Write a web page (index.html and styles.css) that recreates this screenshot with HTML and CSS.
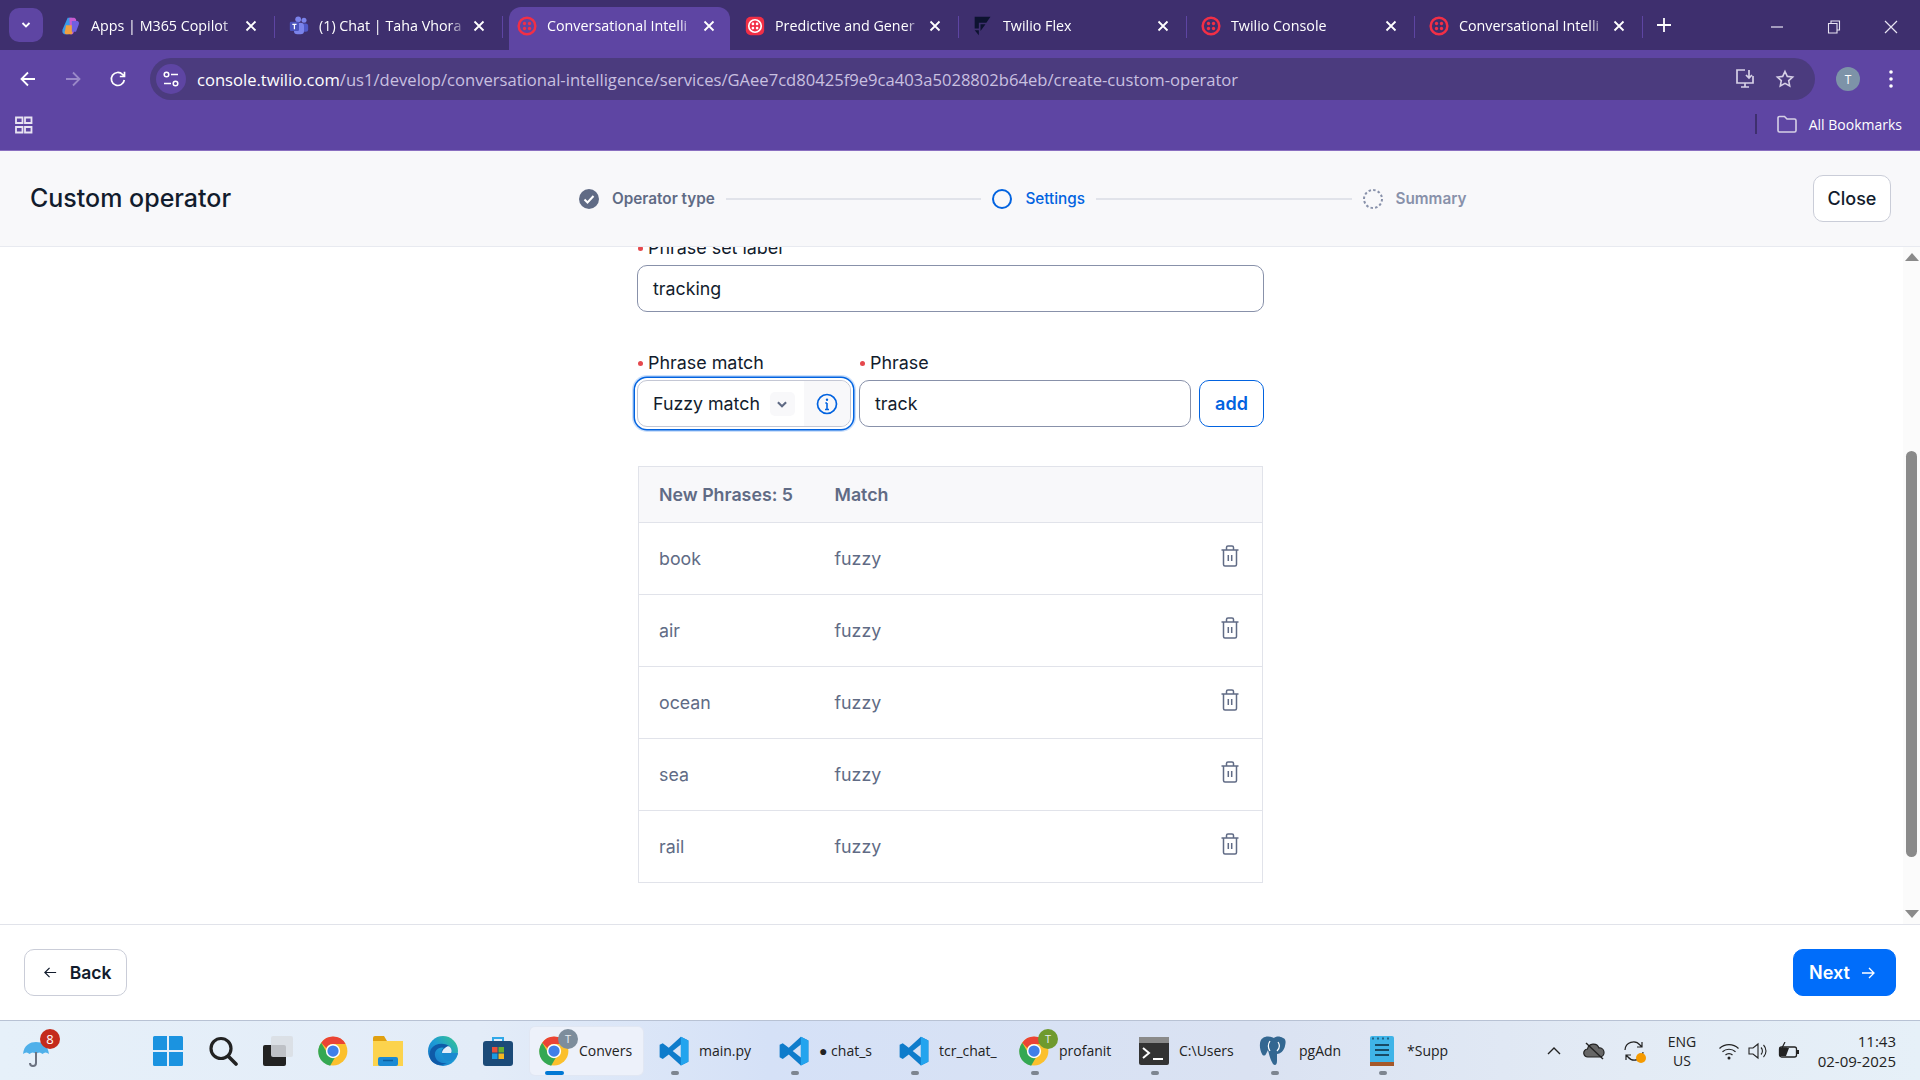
FILE: index.html
```html
<!DOCTYPE html>
<html lang="en">
<head>
  <meta charset="UTF-8" />
  <title>Custom operator</title>
  <link rel="stylesheet" href="styles.css">
</head>
<body>
  <svg class="defs" width="0" height="0">
    <symbol id="x" viewBox="0 0 12 12"><path d="M1.5 1.5l9 9M10.5 1.5l-9 9" fill="none" stroke="currentColor" stroke-width="1.8"/></symbol>
    <symbol id="twilio" viewBox="0 0 24 24">
      <circle cx="12" cy="12" r="10" fill="none" stroke="#f22f46" stroke-width="3"/>
      <circle cx="9" cy="9" r="2" fill="#f22f46"/><circle cx="15" cy="9" r="2" fill="#f22f46"/>
      <circle cx="9" cy="15" r="2" fill="#f22f46"/><circle cx="15" cy="15" r="2" fill="#f22f46"/>
    </symbol>
    <symbol id="chrome" viewBox="0 0 24 24">
      <circle cx="12" cy="12" r="11.5" fill="#fbc02d"/>
      <path d="M12 .5a11.5 11.5 0 0 1 10 5.8H12a5.7 5.7 0 0 0-5.2 3.4L2.6 5.3A11.5 11.5 0 0 1 12 .5z" fill="#ea4335"/>
      <path d="M2.6 5.3l5 8.7a5.7 5.7 0 0 0 5.700 3.500l-3.600 6.200A11.500 11.500 0 0 1 2.600 5.300z" fill="#34a853"/>
      <circle cx="12" cy="12" r="5.700" fill="#fff"/><circle cx="12" cy="12" r="4.500" fill="#3f7fe8"/>
    </symbol>
    <symbol id="vscode" viewBox="0 0 24 24">
      <path fill-rule="evenodd" d="M17.500 .5L23.500 3.500V20.500L17.500 23.500L7.800 14.700L3 18.300L.5 17V7L3 5.700L7.800 9.300zM17.500 6.800L11 12L17.500 17.200z" fill="#0f7ccb"/>
      <path d="M17.500 .5L23.500 3.500V20.500L17.500 23.500z" fill="#23a4ee"/>
    </symbol>
    <symbol id="trash" viewBox="0 0 20 22">
      <path d="M1.500 5h17M3.500 5v14.500a1.500 1.500 0 0 0 1.500 1.500h10a1.500 1.500 0 0 0 1.500-1.500V5M6.500 5V2.500A1.500 1.500 0 0 1 8 1h4a1.500 1.500 0 0 1 1.500 1.500V5M8.300 10v6M11.700 10v6" fill="none" stroke="#606b85" stroke-width="1.500"/>
    </symbol>
  </svg>

  <div class="tabstrip">
    <div class="tab-menu"><svg width="12" height="12" viewBox="0 0 12 12"><path d="M2.500 4l3.500 3.500L9.500 4" fill="none" stroke="#fff" stroke-width="1.800"/></svg></div>
    <div class="tab">
      <svg class="tab-icon" viewBox="0 0 24 24"><path d="M8 2h5l-4 20H5C2 22 1 19 2 16z" fill="#3a9be8"/><path d="M10 2h5c3 0 4 3 3 6l-3 12c-.5 2-2 2-4 2z" fill="#c85ad0"/><path d="M6 11h10l-3 11H7c-3 0-3-3-2-5z" fill="#f0a040"/><path d="M13 6h6c3 0 3 3 2 5l-3 8h-5z" fill="#7060e0"/></svg>
      <span class="tab-title">Apps | M365 Copilot</span>
      <svg class="tab-close"><use href="#x"/></svg>
    </div>
    <div class="tab">
      <svg class="tab-icon" viewBox="0 0 24 24"><circle cx="18" cy="5" r="3" fill="#7b83eb"/><circle cx="11" cy="4" r="3.500" fill="#7b83eb"/><rect x="15" y="9" width="8" height="10" rx="3" fill="#5059c9"/><rect x="6" y="8" width="12" height="14" rx="4" fill="#7b83eb"/><rect x="1" y="7" width="11" height="11" rx="1.500" fill="#4b53bc"/><path d="M4 10h5M6.500 10v6" stroke="#fff" stroke-width="1.500"/></svg>
      <span class="tab-title">(1) Chat | Taha Vhora</span>
      <svg class="tab-close"><use href="#x"/></svg>
    </div>
    <div class="tab tab-active">
      <svg class="tab-icon"><use href="#twilio"/></svg>
      <span class="tab-title">Conversational Intelli</span>
      <svg class="tab-close"><use href="#x"/></svg>
    </div>
    <div class="tab">
      <svg class="tab-icon" viewBox="0 0 24 24"><rect x="1" y="1" width="22" height="22" rx="6" fill="#f22f46"/><circle cx="12" cy="12" r="7.500" fill="none" stroke="#fff" stroke-width="2"/><circle cx="9.500" cy="9.500" r="1.600" fill="#fff"/><circle cx="14.500" cy="9.500" r="1.600" fill="#fff"/><circle cx="9.500" cy="14.500" r="1.600" fill="#fff"/><circle cx="14.500" cy="14.500" r="1.600" fill="#fff"/></svg>
      <span class="tab-title">Predictive and Gener</span>
      <svg class="tab-close"><use href="#x"/></svg>
    </div>
    <div class="tab">
      <svg class="tab-icon" viewBox="0 0 24 24"><path d="M2 1h19l-5 7H7v7H2zM9 10h6l-6 8z M2 17l5 6v-6z" fill="#0d1330"/></svg>
      <span class="tab-title">Twilio Flex</span>
      <svg class="tab-close"><use href="#x"/></svg>
    </div>
    <div class="tab">
      <svg class="tab-icon"><use href="#twilio"/></svg>
      <span class="tab-title">Twilio Console</span>
      <svg class="tab-close"><use href="#x"/></svg>
    </div>
    <div class="tab">
      <svg class="tab-icon"><use href="#twilio"/></svg>
      <span class="tab-title">Conversational Intelli</span>
      <svg class="tab-close"><use href="#x"/></svg>
    </div>
    <svg class="tab-new" width="16" height="16" viewBox="0 0 16 16"><path d="M8 1v14M1 8h14" stroke="#fff" stroke-width="1.800"/></svg>
    <div class="window-btns">
      <svg width="14" height="14" viewBox="0 0 14 14"><path d="M1 7h12" stroke="#e8e4f2" stroke-width="1.200"/></svg>
      <svg width="14" height="14" viewBox="0 0 14 14"><path d="M1.500 3.500h8.500v9.500h-8.500zM4 3.500V1h8.500v9H10" fill="none" stroke="#e8e4f2" stroke-width="1.100"/></svg>
      <svg width="14" height="14" viewBox="0 0 14 14"><path d="M1 1l12 12M13 1L1 13" stroke="#e8e4f2" stroke-width="1.200"/></svg>
    </div>
  </div>

  <div class="toolbar">
    <div class="nav-row">
      <svg class="nav-icon" viewBox="0 0 20 20"><path d="M17 10H4M10 3.500L3.500 10l6.500 6.500" fill="none" stroke="#fff" stroke-width="1.800"/></svg>
      <svg class="nav-icon" viewBox="0 0 20 20"><path d="M3 10h13M10 3.500l6.500 6.500-6.500 6.500" fill="none" stroke="#9a89c8" stroke-width="1.800"/></svg>
      <svg class="nav-icon" viewBox="0 0 20 20"><path d="M16.300 11a6.500 6.500 0 1 1-1.700-5.500L16.500 7.500M16.500 2.800v4.700h-4.700" fill="none" stroke="#fff" stroke-width="1.700"/></svg>
      <div class="omnibox">
        <div class="site-btn"><svg width="18" height="18" viewBox="0 0 18 18"><circle cx="4.500" cy="4.500" r="2.300" fill="none" stroke="#fff" stroke-width="1.500"/><path d="M9 4.500h7M2 13.500h7" stroke="#fff" stroke-width="1.500"/><circle cx="13.500" cy="13.500" r="2.300" fill="none" stroke="#fff" stroke-width="1.500"/></svg></div>
        <div class="url"><span class="url-host">console.twilio.com</span>/us1/develop/conversational-intelligence/services/GAee7cd80425f9e9ca403a5028802b64eb/create-custom-operator</div>
        <svg class="omni-icon" viewBox="0 0 22 22"><path d="M11 2H3v13h16v-7M7 19h8M11 15v4M15 2v8M12 7l3 3 3-3" fill="none" stroke="#d6d0e6" stroke-width="1.700"/></svg>
        <svg class="omni-icon" viewBox="0 0 22 22"><path d="M11 3.500l2.300 4.900 5.300.6-3.900 3.600 1 5.300L11 15.300l-4.700 2.600 1-5.300L3.400 9l5.300-.6z" fill="none" stroke="#d6d0e6" stroke-width="1.600"/></svg>
      </div>
      <div class="avatar">T</div>
      <svg class="kebab" width="4" height="18" viewBox="0 0 4 18"><circle cx="2" cy="2" r="1.800" fill="#fff"/><circle cx="2" cy="9" r="1.800" fill="#fff"/><circle cx="2" cy="16" r="1.800" fill="#fff"/></svg>
    </div>
    <div class="bookmarks-row">
      <svg class="apps-icon" width="20" height="20" viewBox="0 0 20 20"><path d="M2 2.500h6.500v5.500h-6.500zM11 2.500h6.500v5.500h-6.500zM2 12h6.500v5.500h-6.500zM11 12h6.500v5.500h-6.500z" fill="none" stroke="#e8e4f2" stroke-width="1.800"/></svg>
      <div class="bookmarks-right">
        <div class="bm-divider"></div>
        <svg width="20" height="18" viewBox="0 0 20 18"><path d="M1 3a1.500 1.500 0 0 1 1.500-1.500h5L10 4h7.500A1.500 1.500 0 0 1 19 5.500v10a1.500 1.500 0 0 1-1.500 1.500h-15A1.500 1.500 0 0 1 1 15.500z" fill="none" stroke="#d6d0e6" stroke-width="1.600"/></svg>
        <span class="bm-label">All Bookmarks</span>
      </div>
    </div>
  </div>

  <header class="page-header">
    <h1 class="page-title">Custom operator</h1>
    <div class="stepper">
      <svg class="step-icon" viewBox="0 0 20 20"><circle cx="10" cy="10" r="10" fill="#606b85"/><path d="M5.500 10.500l3 3 6-6.500" fill="none" stroke="#fff" stroke-width="2"/></svg>
      <span class="step-label">Operator type</span>
      <div class="step-line"></div>
      <svg class="step-icon" viewBox="0 0 20 20"><circle cx="10" cy="10" r="9" fill="none" stroke="#0263e0" stroke-width="2"/></svg>
      <span class="step-label step-current">Settings</span>
      <div class="step-line"></div>
      <svg class="step-icon" viewBox="0 0 20 20"><circle cx="10" cy="10" r="9" fill="none" stroke="#8891aa" stroke-width="2" stroke-dasharray="2.500 2.200"/></svg>
      <span class="step-label step-todo">Summary</span>
    </div>
    <button class="btn btn-close">Close</button>
  </header>

  <main class="main">
    <div class="scroll-area">
      <form class="form">
        <label class="field-label"><span class="req"></span>Phrase set label</label>
        <div class="input">tracking</div>

        <div class="phrase-row">
          <div class="col-match">
            <label class="field-label"><span class="req"></span>Phrase match</label>
            <div class="select">
              <span class="select-value">Fuzzy match</span>
              <span class="select-chevron"><svg width="14" height="14" viewBox="0 0 12 12"><path d="M2.500 4.500L6 8l3.500-3.500" fill="none" stroke="#606b85" stroke-width="1.800"/></svg></span>
              <span class="select-info"><svg width="22" height="22" viewBox="0 0 22 22"><circle cx="11" cy="11" r="9.500" fill="none" stroke="#0263e0" stroke-width="1.700"/><circle cx="11" cy="6.800" r="1.200" fill="#0263e0"/><path d="M11 10v6.500M9 16.500h4M9.300 10H11" stroke="#0263e0" stroke-width="1.600" fill="none"/></svg></span>
            </div>
          </div>
          <div class="col-phrase">
            <label class="field-label"><span class="req"></span>Phrase</label>
            <div class="input">track</div>
          </div>
          <button type="button" class="btn btn-add">add</button>
        </div>

        <table class="phrases">
          <thead>
            <tr><th class="col-1">New Phrases: 5</th><th>Match</th><th class="col-3"></th></tr>
          </thead>
          <tbody>
            <tr><td class="col-1">book</td><td>fuzzy</td><td class="col-3"><svg class="trash"><use href="#trash"/></svg></td></tr>
            <tr><td class="col-1">air</td><td>fuzzy</td><td class="col-3"><svg class="trash"><use href="#trash"/></svg></td></tr>
            <tr><td class="col-1">ocean</td><td>fuzzy</td><td class="col-3"><svg class="trash"><use href="#trash"/></svg></td></tr>
            <tr><td class="col-1">sea</td><td>fuzzy</td><td class="col-3"><svg class="trash"><use href="#trash"/></svg></td></tr>
            <tr><td class="col-1">rail</td><td>fuzzy</td><td class="col-3"><svg class="trash"><use href="#trash"/></svg></td></tr>
          </tbody>
        </table>
      </form>
    </div>
    <div class="scrollbar">
      <span class="arrow-up"></span>
      <div class="thumb"></div>
      <span class="arrow-down"></span>
    </div>
  </main>

  <footer class="page-footer">
    <button class="btn btn-back"><svg width="15" height="15" viewBox="0 0 16 16"><path d="M14 8H2M7 3L2 8l5 5" fill="none" stroke="#121c2d" stroke-width="1.300"/></svg>Back</button>
    <button class="btn btn-next">Next<svg width="16" height="16" viewBox="0 0 16 16"><path d="M2 8h12M9 3l5 5-5 5" fill="none" stroke="#fff" stroke-width="1.300"/></svg></button>
  </footer>

  <div class="taskbar">
    <div class="weather">
      <svg width="30" height="36" viewBox="0 0 30 36"><path d="M1 21C2 12 8 9 14 9s12 3 13 12c-2.500-2-4.500-2-6.500 0-2-2-4.500-2-6.500 0-2-2-4.500-2-6.500 0-2-2-4-2-6.500 0z" fill="#4fb0ea"/><path d="M14 19v11a3 3 0 0 1-6 0" fill="none" stroke="#6b7280" stroke-width="2"/></svg>
      <span class="weather-badge">8</span>
    </div>
    <div class="task-icons">
      <svg class="task-icon" viewBox="0 0 30 30"><path d="M0 1.500A1.500 1.500 0 0 1 1.500 0H14v14H0zM16 0h12.500A1.500 1.500 0 0 1 30 1.500V14H16zM0 16h14v14H1.500A1.500 1.500 0 0 1 0 28.500zM16 16h14v12.500a1.500 1.500 0 0 1-1.500 1.500H16z" fill="#1b93e0"/></svg>
      <svg class="task-icon" viewBox="0 0 30 30"><circle cx="13" cy="12.500" r="10" fill="none" stroke="#222" stroke-width="3.200"/><path d="M20.500 20.500L28 28" stroke="#222" stroke-width="3.600" stroke-linecap="round"/></svg>
      <svg class="task-icon" viewBox="0 0 30 30"><rect x="0" y="9" width="23" height="21" rx="2" fill="#222"/><rect x="8" y="0" width="22" height="21" rx="2" fill="#d9dde3" opacity=".85"/></svg>
      <svg class="task-icon"><use href="#chrome"/></svg>
      <svg class="task-icon" viewBox="0 0 30 30"><path d="M0 2a2 2 0 0 1 2-2h9l3 5H0z" fill="#e0a010"/><path d="M0 5h30v25H0z" fill="#fcd34d"/><rect x="5" y="21" width="20" height="9" rx="2" fill="#1a8ad4"/><path d="M10 24.500h10" stroke="#0b5fa0" stroke-width="1.500"/></svg>
      <svg class="task-icon" viewBox="0 0 30 30"><defs><linearGradient id="edge" x1="1" y1="0" x2="0" y2="1"><stop offset="0" stop-color="#39c98a"/><stop offset=".5" stop-color="#1c9ad6"/><stop offset="1" stop-color="#1a6fc4"/></linearGradient></defs><circle cx="15" cy="15" r="15" fill="url(#edge)"/><path d="M3 13c4-6 14-7 19-2 2 2 2 5 1 6h-9c-1-3 1-5 3-5-6-2-11 2-10 8 1 5 6 8 12 7-3 2-9 3-13 0C2 25 0 19 3 13z" fill="#0f5aa8"/><path d="M14 17h16c-1 5-5 8-9 8-4 0-6-2-7-8z" fill="#1c8ad0"/><path d="M14 17h9c1-1 1-4-1-6-1-1-3-1-5 1-2 1-3 3-3 5z" fill="#e3edfa"/></svg>
      <svg class="task-icon" viewBox="0 0 30 30"><path d="M10 6V2h10v4" fill="none" stroke="#30a8e8" stroke-width="2"/><rect x="0" y="5" width="30" height="25" rx="3" fill="#1b4a78"/><rect x="9" y="11" width="5.500" height="5.500" fill="#e8503a"/><rect x="15.500" y="11" width="5.500" height="5.500" fill="#68b030"/><rect x="9" y="17.500" width="5.500" height="5.500" fill="#1b9ae0"/><rect x="15.500" y="17.500" width="5.500" height="5.500" fill="#f5b820"/></svg>
    </div>
    <div class="task-item task-active">
      <span class="task-pic"><svg class="task-icon"><use href="#chrome"/></svg><span class="profile-dot dot-gray">T</span></span>
      <span class="task-label">Convers</span>
      <span class="indicator indicator-on"></span>
    </div>
    <div class="task-item">
      <span class="task-pic"><svg class="task-icon"><use href="#vscode"/></svg></span>
      <span class="task-label">main.py</span>
      <span class="indicator"></span>
    </div>
    <div class="task-item">
      <span class="task-pic"><svg class="task-icon"><use href="#vscode"/></svg></span>
      <span class="task-label">● chat_s</span>
      <span class="indicator"></span>
    </div>
    <div class="task-item">
      <span class="task-pic"><svg class="task-icon"><use href="#vscode"/></svg></span>
      <span class="task-label">tcr_chat_</span>
      <span class="indicator"></span>
    </div>
    <div class="task-item">
      <span class="task-pic"><svg class="task-icon"><use href="#chrome"/></svg><span class="profile-dot dot-green">T</span></span>
      <span class="task-label">profanit</span>
      <span class="indicator"></span>
    </div>
    <div class="task-item">
      <span class="task-pic"><svg class="task-icon" viewBox="0 0 30 30"><rect y="1" width="30" height="28" rx="2" fill="#333"/><rect y="1" width="30" height="6" fill="#8a8a8a"/><path d="M4 12l6 5-6 5" fill="none" stroke="#fff" stroke-width="2"/><path d="M14 23h10" stroke="#fff" stroke-width="2"/></svg></span>
      <span class="task-label">C:\Users</span>
      <span class="indicator"></span>
    </div>
    <div class="task-item">
      <span class="task-pic"><svg class="task-icon" viewBox="0 0 30 30"><path d="M4 2c-4 2-4 10-1 16 1 2 3 2 4 0l2-4c1 4 2 9 5 14 2 2 4 1 4-3v-7c3 0 7-3 8-8 1-4 1-7-2-8-3-2-7-2-9 0-3-2-9-2-11 0z" fill="#336791"/><path d="M11 5c-2 3-2 7 0 10M19 6c2 3 2 6-1 9" stroke="#fff" stroke-width="1.200" fill="none"/></svg></span>
      <span class="task-label">pgAdn</span>
      <span class="indicator"></span>
    </div>
    <div class="task-item task-short">
      <span class="task-pic"><svg class="task-icon" viewBox="0 0 24 30"><rect width="24" height="28" rx="2" fill="#3fb4e8"/><path d="M3 1.500v2M8 1.500v2M13 1.500v2M18 1.500v2" stroke="#184a66" stroke-width="1.500"/><path d="M5 9h14M5 14h14M5 19h14" stroke="#184a66" stroke-width="2"/><rect y="26" width="24" height="4" fill="#a5582a"/></svg></span>
      <span class="task-label">*Supp</span>
      <span class="indicator"></span>
    </div>
    <div class="tray">
      <svg class="tray-caret" width="14" height="8" viewBox="0 0 14 8"><path d="M1 7l6-6 6 6" fill="none" stroke="#222" stroke-width="1.400"/></svg>
      <svg class="tray-cloud" width="22" height="18" viewBox="0 0 22 18"><path d="M5 15a4 4 0 0 1-.5-8A6 6 0 0 1 16 6a4.500 4.500 0 0 1 1 9z" fill="#666" stroke="#222" stroke-width="1.200"/><path d="M3 1l17 16" stroke="#222" stroke-width="1.400"/></svg>
      <span class="sync"><svg width="22" height="22" viewBox="0 0 22 22"><path d="M2 10a8.500 8.500 0 0 1 15-5l2 2M19 2v5h-5M20 12a8.500 8.500 0 0 1-15 5l-2-2M3 20v-5h5" fill="none" stroke="#222" stroke-width="1.200"/></svg><span class="sync-dot"></span></span>
      <div class="lang"><span>ENG</span><span>US</span></div>
      <svg class="tray-wifi" width="22" height="18" viewBox="0 0 22 18"><path d="M1.500 6.500a13.500 13.500 0 0 1 19 0M4.500 9.800a9.500 9.500 0 0 1 13 0M7.500 13a5 5 0 0 1 7 0" fill="none" stroke="#222" stroke-width="1.200"/><circle cx="11" cy="16" r="1.500" fill="#222"/></svg>
      <svg class="tray-speaker" width="22" height="18" viewBox="0 0 22 18"><path d="M1 6h4l5-4v14l-5-4H1zM13 5.500a5 5 0 0 1 0 7M15.500 3a8.500 8.500 0 0 1 0 12" fill="none" stroke="#222" stroke-width="1.100"/></svg>
      <svg class="tray-battery" width="22" height="18" viewBox="0 0 22 18"><rect x="1.500" y="5" width="17" height="10" rx="2" fill="none" stroke="#222" stroke-width="1.300"/><path d="M2 6h9l-3 8H2z" fill="#222"/><rect x="19" y="8" width="2" height="4" fill="#222"/><path d="M7 0L4 6h4l-2 4" fill="none" stroke="#222" stroke-width="1.200"/></svg>
      <div class="clock"><span>11:43</span><span>02-09-2025</span></div>
    </div>
  </div>
</body>
</html>
```

FILE: styles.css
```css
* {
  box-sizing: border-box;
}

html, body {
  margin: 0;
  height: 1080px;
  overflow: hidden;
}

body {
  display: flex;
  flex-direction: column;
  font-family: "Inter", "Liberation Sans", sans-serif;
  color: #121c2d;
  background-color: #fff;
}

.defs {
  position: absolute;
}

/* ----------- browser tabs ----------- */

.tabstrip {
  display: flex;
  align-items: flex-end;
  height: 50px;
  padding-left: 9px;
  background-color: #3e2f6e;
  font-family: "Open Sans", sans-serif;
  color: #fff;
}

.tab-menu {
  display: flex;
  align-items: center;
  justify-content: center;
  width: 34px;
  height: 34px;
  margin: 0 10px 8px 0;
  border-radius: 10px;
  background-color: #5e45a3;
}

.tab {
  position: relative;
  display: flex;
  align-items: center;
  width: 228px;
  height: 43px;
  padding: 0 24px 6px 8px;
  font-size: 14.300px;
}

.tab::after {
  content: "";
  position: absolute;
  right: 6px;
  top: 9px;
  width: 1px;
  height: 22px;
  background-color: #5e45a3;
}

.tab-active {
  width: 221px;
  margin-right: 7px;
  padding-right: 15px;
  border-radius: 12px 12px 0 0;
  background-color: #5e45a3;
}

.tab-active::after {
  display: none;
}

.tab-icon {
  flex: none;
  width: 20px;
  height: 20px;
  margin-right: 10px;
}

.tab-title {
  flex: 1;
  overflow: hidden;
  white-space: nowrap;
  margin-right: 6px;
  -webkit-mask-image: linear-gradient(to right, #000 88%, transparent);
  mask-image: linear-gradient(to right, #000 88%, transparent);
}

.tab-close {
  flex: none;
  width: 12px;
  height: 12px;
}

.tab-new {
  margin: 0 0 17px 7px;
}

.window-btns {
  display: flex;
  gap: 43px;
  margin: 0 0 16px auto;
  padding-right: 22px;
}

/* ----------- browser toolbar ----------- */

.toolbar {
  height: 101px;
  border-bottom: 1px solid #8a6fc0;
  background-color: #5e45a3;
  font-family: "Open Sans", sans-serif;
  color: #fff;
}

.nav-row {
  display: flex;
  align-items: center;
  height: 42px;
  margin-top: 8px;
  padding: 0 19px 0 18px;
}

.nav-icon {
  flex: none;
  width: 20px;
  height: 20px;
  margin-right: 25px;
}

.omnibox {
  display: flex;
  align-items: center;
  width: 1665px;
  height: 42px;
  margin-left: -3px;
  padding: 0 19px 0 6px;
  border-radius: 21px;
  background-color: #4b3b7e;
}

.site-btn {
  display: flex;
  align-items: center;
  justify-content: center;
  width: 30px;
  height: 30px;
  border-radius: 50%;
  background-color: #5e45a3;
}

.url {
  flex: 1;
  margin-left: 11px;
  font-size: 16.600px;
  white-space: nowrap;
  color: #c9c0e0;
}

.url-host {
  color: #fff;
}

.omni-icon {
  width: 22px;
  height: 22px;
  margin-left: 18px;
}

.avatar {
  display: flex;
  flex: none;
  align-items: center;
  justify-content: center;
  width: 24px;
  height: 24px;
  margin-left: 21px;
  border-radius: 50%;
  background-color: #7d93a8;
  font-size: 12px;
}

.kebab {
  flex: none;
  margin-left: 29px;
}

.bookmarks-row {
  display: flex;
  align-items: center;
  height: 50px;
  padding: 0 18px 2px 14px;
}

.apps-icon {
  margin-top: 2px;
}

.bookmarks-right {
  display: flex;
  align-items: center;
  gap: 12px;
  margin-left: auto;
  font-size: 14px;
}

.bm-divider {
  width: 2px;
  height: 20px;
  margin-right: 8px;
  background-color: #3e2f6e;
}

/* ----------- page header ----------- */

.page-header {
  display: flex;
  align-items: center;
  height: 96px;
  padding: 0 29px 0 30px;
  border-bottom: 1px solid #e8eaf0;
  background-color: #f8f8fa;
}

.page-title {
  width: 549px;
  margin: 0 0 1px;
  font-size: 25px;
  font-weight: 500;
}

.stepper {
  display: flex;
  align-items: center;
}

.step-icon {
  flex: none;
  width: 20px;
  height: 20px;
}

.step-label {
  margin: 0 11px 0 13px;
  font-size: 15.300px;
  font-weight: 600;
  color: #606b85;
}

.step-current {
  color: #0263e0;
  font-weight: 500;
}

.step-todo {
  color: #8891aa;
}

.step-line {
  width: 255.500px;
  height: 2px;
  margin-right: 11px;
  background-color: #e1e3ea;
}

/* ----------- buttons ----------- */

.btn {
  display: flex;
  align-items: center;
  justify-content: center;
  height: 47px;
  border: 1px solid #cacdd8;
  border-radius: 10px;
  background-color: #fff;
  font-family: "Inter", "Liberation Sans", sans-serif;
  font-size: 18px;
  font-weight: 600;
  color: #121c2d;
}

.btn-close {
  width: 78px;
  margin-left: auto;
  font-weight: 500;
}

.btn-add {
  flex: none;
  width: 65px;
  border-color: #0263e0;
  color: #0263e0;
}

.btn-back {
  gap: 12px;
  width: 103px;
  padding: 0 0 0 3px;
  font-size: 17.500px;
}

.btn-next {
  gap: 10px;
  width: 103px;
  padding: 0 4px 0 0;
  border-color: #006dfa;
  background-color: #006dfa;
  color: #fff;
}

/* ----------- form ----------- */

.main {
  display: flex;
  flex: 1;
  min-height: 0;
}

.scroll-area {
  display: flex;
  flex: 1;
  justify-content: center;
  padding-right: 2px;
  overflow: hidden;
}

.form {
  width: 627px;
  margin-top: -11px;
}

.field-label {
  display: flex;
  align-items: center;
  height: 24px;
  margin-bottom: 5px;
  padding-left: 1px;
  font-size: 17.900px;
  line-height: 24px;
}

.req {
  flex: none;
  width: 5px;
  height: 5px;
  margin-right: 5px;
  border-radius: 50%;
  background-color: #e5484d;
}

.input {
  display: flex;
  align-items: center;
  height: 47px;
  padding: 0 15px;
  border: 1px solid #8891aa;
  border-radius: 10px;
  background-color: #fff;
  font-size: 17.800px;
}

.phrase-row {
  display: flex;
  align-items: flex-end;
  gap: 8px;
  margin-top: 39px;
}

.col-match {
  flex: none;
  width: 214px;
}

.col-phrase {
  flex: 1;
}

.select {
  display: flex;
  align-items: center;
  height: 47px;
  padding-left: 15px;
  overflow: hidden;
  border: 1px solid #c4c7d4;
  border-radius: 10px;
  background-color: #fff;
  box-shadow: 0 0 0 2px #fff, 0 0 0 3.500px #0263e0, 0 0 0 5px #cce0fb;
  font-size: 17.800px;
}

.select-value {
  white-space: nowrap;
}

.select-chevron {
  display: flex;
  align-items: center;
  justify-content: center;
  flex: none;
  width: 25px;
  height: 24px;
  margin-left: 10px;
  border-radius: 5px;
  background-color: #f8f8fa;
}

.select-info {
  display: flex;
  align-items: center;
  justify-content: center;
  flex: none;
  width: 46px;
  height: 100%;
  margin-left: auto;
  background-color: #f8f8fa;
}

/* ----------- table ----------- */

.phrases {
  width: 625px;
  margin: 39px 0 0 1px;
  border: 1px solid #e1e3ea;
  border-collapse: collapse;
  table-layout: fixed;
  font-size: 17.800px;
}

.phrases th {
  height: 56px;
  padding: 0;
  border-bottom: 1px solid #e1e3ea;
  background-color: #f8f8fa;
  text-align: left;
  font-weight: 600;
  color: #606b85;
}

.phrases td {
  height: 72px;
  padding: 0;
  border-bottom: 1px solid #e1e3ea;
  font-weight: 400;
  color: #606b85;
}

.phrases .col-1 {
  width: 196px;
  padding-left: 20px;
}

.phrases .col-3 {
  width: 56px;
  padding-left: 13px;
}

.trash {
  display: block;
  width: 20px;
  height: 22px;
  margin-top: -6px;
}

/* ----------- scrollbar ----------- */

.scrollbar {
  display: flex;
  flex: none;
  flex-direction: column;
  align-items: center;
  width: 17px;
  padding-top: 6px;
  background-color: #fbfbfb;
}

.arrow-up {
  width: 0;
  height: 0;
  border: 7px solid transparent;
  border-top: 0;
  border-bottom: 8px solid #8a8a8a;
}

.thumb {
  width: 11px;
  height: 406px;
  margin: 190px 0 53px;
  border-radius: 6px;
  background-color: #8a8a8a;
}

.arrow-down {
  width: 0;
  height: 0;
  border: 7px solid transparent;
  border-bottom: 0;
  border-top: 8px solid #8a8a8a;
}

/* ----------- page footer ----------- */

.page-footer {
  display: flex;
  align-items: center;
  justify-content: space-between;
  height: 96px;
  padding: 0 24px;
  border-top: 1px solid #e1e3ea;
}

/* ----------- windows taskbar ----------- */

.taskbar {
  display: flex;
  align-items: center;
  height: 60px;
  border-top: 1px solid #b8c2d4;
  background: linear-gradient(to right, #e6f0f9 0%, #e3ecf8 25%, #d5e1f7 40%, #dae2f2 65%, #e3ebf5 85%, #e6f0f8 100%);
  font-family: "Open Sans", sans-serif;
  font-size: 14px;
  color: #222;
}

.weather {
  position: relative;
  flex: none;
  width: 153px;
  height: 36px;
  padding-left: 22px;
}

.weather-badge {
  position: absolute;
  left: 40px;
  top: -4px;
  width: 20px;
  height: 20px;
  border-radius: 50%;
  background-color: #c42b1c;
  color: #fff;
  font-size: 13px;
  line-height: 20px;
  text-align: center;
}

.task-icons {
  display: flex;
  gap: 25px;
  width: 377px;
}

.task-icon {
  display: block;
  flex: none;
  width: 30px;
  height: 30px;
}

.task-item {
  position: relative;
  display: flex;
  flex: none;
  align-items: center;
  gap: 10px;
  width: 113px;
  height: 48px;
  margin-right: 7px;
  padding: 0 0 0 9px;
  border-radius: 5px;
}

.task-short {
  width: 89px;
  margin-left: -12px;
  gap: 10px;
}

.task-active {
  background-color: #edf1fa;
  box-shadow: 0 0 0 1px #e1e7f3;
}

.task-pic {
  position: relative;
  flex: none;
}

.task-label {
  flex: none;
  width: 60px;
  overflow: hidden;
  white-space: nowrap;
}

.profile-dot {
  position: absolute;
  right: -9px;
  top: -7px;
  width: 20px;
  height: 20px;
  border-radius: 50%;
  color: #e8edf2;
  font-size: 11px;
  line-height: 20px;
  text-align: center;
}

.dot-gray {
  background-color: #7d8d9c;
}

.dot-green {
  background-color: #6f9a2e;
}

.indicator {
  position: absolute;
  left: 21px;
  bottom: 0;
  width: 8px;
  height: 4px;
  border-radius: 2px;
  background-color: #7d8590;
}

.indicator-on {
  left: 15px;
  width: 19px;
  background-color: #0078d4;
}

.tray {
  display: flex;
  flex: 1;
  align-items: center;
  margin-left: 93px;
  padding-right: 24px;
}

.tray-cloud {
  margin-left: 22px;
}

.sync {
  position: relative;
  display: block;
  height: 22px;
  margin-left: 18px;
}

.sync-dot {
  position: absolute;
  right: -1px;
  bottom: -1px;
  width: 10px;
  height: 10px;
  border-radius: 50%;
  background-color: #f59a00;
}

.lang {
  display: flex;
  flex-direction: column;
  align-items: center;
  width: 40px;
  margin-left: 17px;
  line-height: 19px;
}

.tray-wifi {
  margin-left: 16px;
}

.tray-speaker,
.tray-battery {
  margin-left: 8px;
}

.clock {
  display: flex;
  flex-direction: column;
  align-items: flex-end;
  margin-left: auto;
  font-size: 15px;
  line-height: 20px;
}
```
